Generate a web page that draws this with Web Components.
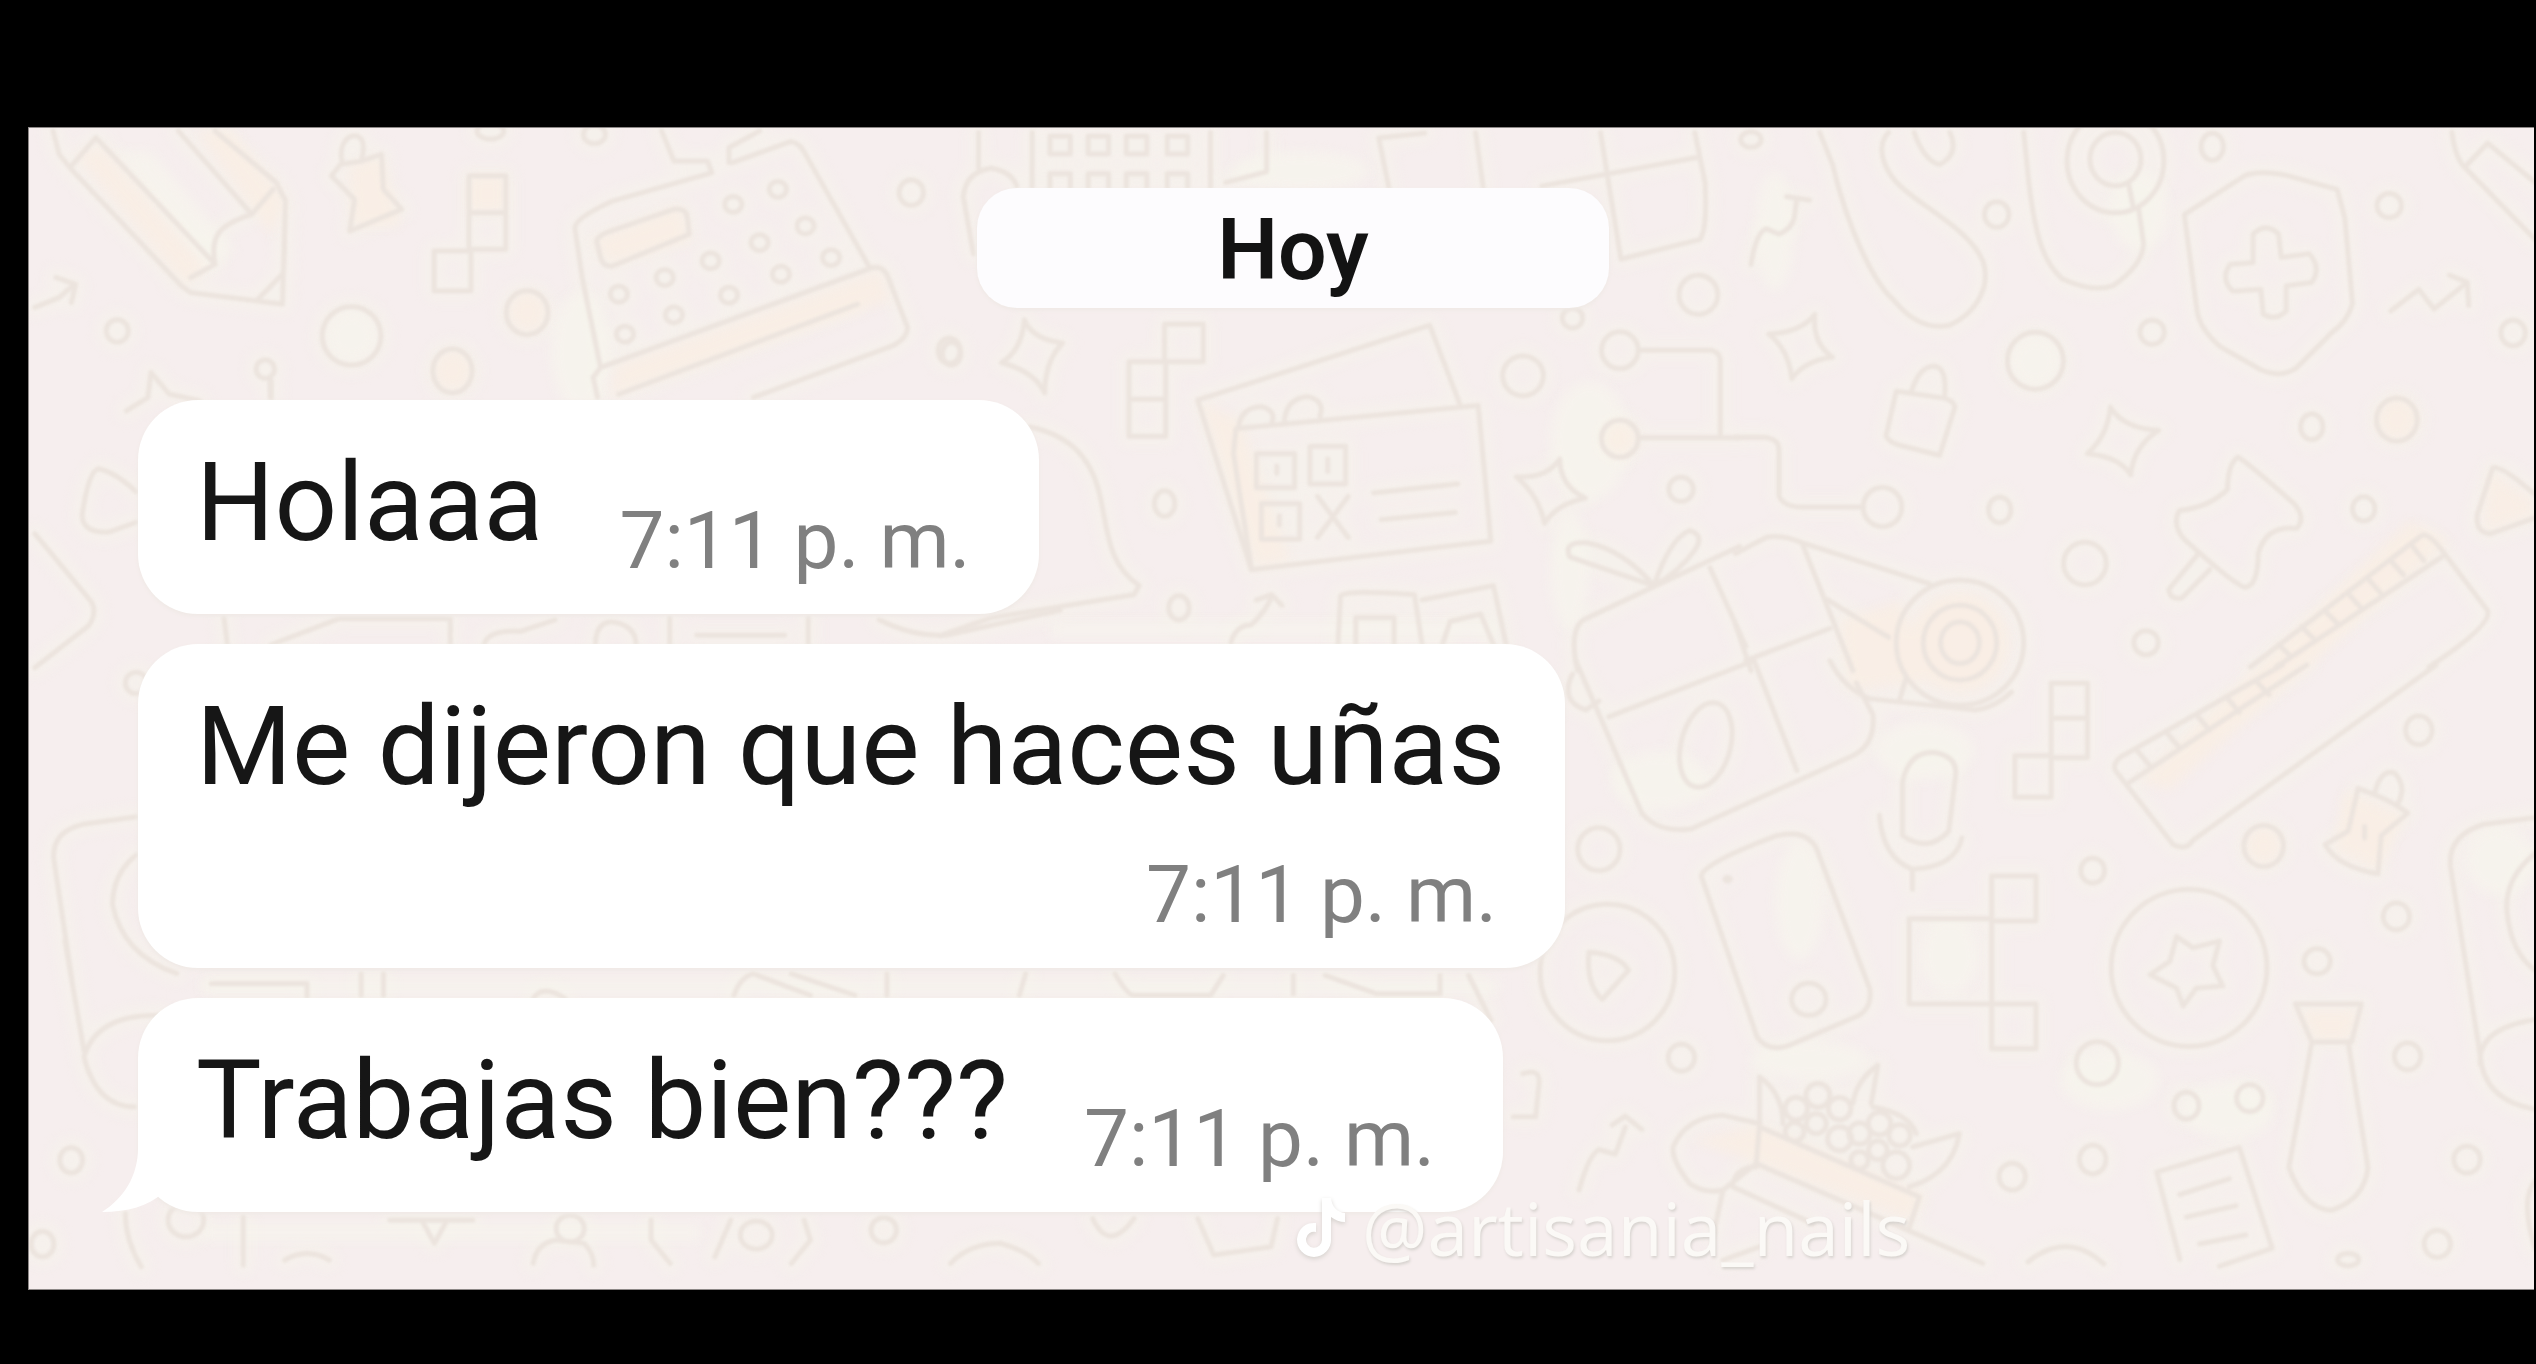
<!DOCTYPE html>
<html lang="es">
<head>
<meta charset="utf-8">
<title>Chat</title>
<style>
  body { margin: 0; background: #000; }
</style>
</head>
<body>
<chat-screen>
  <chat-wallpaper slot="wallpaper"></chat-wallpaper>
  <day-pill>Hoy</day-pill>
  <message-list>
    <chat-bubble time="7:11 p. m.">Holaaa</chat-bubble>
    <chat-bubble time="7:11 p. m." stacked>Me dijeron que haces uñas</chat-bubble>
    <chat-bubble time="7:11 p. m." tail>Trabajas bien???</chat-bubble>
  </message-list>
  <video-credit slot="credit">@artisania_nails</video-credit>
</chat-screen>

<template id="wallpaper">
  <style>
    :host { display: block; overflow: hidden; }
    svg { display: block; width: 100%; height: 100%; }
    #doodles * { vector-effect: non-scaling-stroke; }
    .line { fill: none; stroke-linecap: round; stroke-linejoin: round; }
    .tint { stroke: none; }
    .peach { opacity: .85; }
    .cream { opacity: .7; }
    .halo { opacity: .6; }
    .soft { filter: blur(6px); }
    .ink { filter: blur(1px); }
  </style>
  <svg viewBox="28 127 2507 1166" preserveAspectRatio="xMinYMin slice" aria-hidden="true">
    <defs>
      <g id="doodles">
        <g transform="translate(0 110) scale(.6122 .3333)">
          <path d="M85 60L95 130 115 175 295 525 310 545 460 580 465 270 450 215 350 60M155 80L350 460M115 165L155 80M290 60L410 310M350 460C340 370 360 340 410 310M350 460L310 500M410 310L445 235M420 565L460 490"/>
          <path d="M555 160L540 195 578 265 570 360 655 295 625 235 622 130 590 150ZM558 155C545 60 605 40 590 140"/>
          <path d="M765 195H825V305H765ZM765 305H825V415H765ZM708 420H768V540H708Z"/>
          <ellipse cx="573" cy="675" rx="48" ry="88"/><ellipse cx="860" cy="605" rx="34" ry="66"/><ellipse cx="738" cy="780" rx="32" ry="66"/>
          <ellipse cx="190" cy="660" rx="18" ry="34"/><ellipse cx="1488" cy="245" rx="20" ry="38"/><ellipse cx="432" cy="775" rx="15" ry="28"/><ellipse cx="1550" cy="720" rx="18" ry="38"/>
          <ellipse cx="800" cy="60" rx="22" ry="24"/><ellipse cx="970" cy="70" rx="18" ry="28"/>
          <path d="M440 800V860M55 590L95 560 120 520M90 500L122 520 115 575M245 785L275 850 325 870M245 785L240 860 205 900"/>
          <path d="M980 770L950 500 938 350Q940 320 1000 270L1162 185 1155 150H1100L1080 60M1190 155V110L1240 60M1195 155L1290 92Q1305 95 1312 120L1420 470"/>
          <path d="M980 770L1425 470Q1440 465 1448 490L1482 650Q1480 690 1450 710L1230 860M980 770L968 800 975 860M1010 850L1400 580M975 400Q970 380 990 365L1100 295Q1120 290 1122 320L1125 370 1000 465Q985 470 980 440Z"/>
          <g><ellipse cx="1270" cy="235" rx="14" ry="24"/><ellipse cx="1197" cy="280" rx="14" ry="24"/><ellipse cx="1315" cy="345" rx="14" ry="24"/><ellipse cx="1240" cy="395" rx="14" ry="24"/><ellipse cx="1160" cy="450" rx="14" ry="24"/><ellipse cx="1085" cy="500" rx="14" ry="24"/><ellipse cx="1010" cy="550" rx="14" ry="24"/><ellipse cx="1357" cy="440" rx="14" ry="24"/><ellipse cx="1275" cy="490" rx="14" ry="24"/><ellipse cx="1190" cy="553" rx="14" ry="24"/><ellipse cx="1100" cy="612" rx="14" ry="24"/><ellipse cx="1020" cy="670" rx="14" ry="24"/></g>
        </g>
        <g transform="translate(940 110) scale(.5102 .3571)">
          <path d="M75 60V160M180 60V215M530 60V215M640 60V170L560 200M65 400L45 240Q50 170 100 160 140 170 150 210"/>
          <path d="M215 70H255V120H215ZM290 70H330V120H290ZM365 70H405V120H365ZM445 70H485V120H445ZM215 215V175H255V215M290 215V175H330V215M365 215V175H405V215M445 215V175H485V215"/>
          <path d="M880 215L860 75 950 62M1050 60L1065 215M1295 60L1335 415 1490 360Q1505 330 1500 200L1480 60M1180 210L1485 130"/>
          <ellipse cx="1487" cy="515" rx="38" ry="55"/><ellipse cx="1143" cy="742" rx="40" ry="56"/><ellipse cx="1333" cy="670" rx="36" ry="52"/><ellipse cx="1333" cy="918" rx="36" ry="52"/><ellipse cx="1453" cy="1060" rx="24" ry="34"/><ellipse cx="1240" cy="580" rx="20" ry="28"/><ellipse cx="440" cy="1100" rx="20" ry="36"/><ellipse cx="468" cy="1392" rx="20" ry="34"/><ellipse cx="22" cy="680" rx="18" ry="32"/>
          <path d="M165 585Q180 640 240 650 205 700 205 790 185 730 120 705 160 670 165 585ZM440 597H516V702H440ZM370 702H442V807H370ZM370 807H442V912H370Z"/>
          <path d="M1020 825L960 600 505 810 610 1285 1080 1205 1055 825 580 890 575 960 610 1280M585 885Q590 830 630 828 660 840 650 875M675 865Q680 805 720 800 755 810 745 855"/>
          <path d="M620 960H695V1055H620ZM725 940H795V1045H725ZM630 1100H705V1200H630ZM740 1080L800 1195M800 1080L740 1195M850 1070L1015 1045M865 1145L1010 1125M660 995V1015M760 975V1010M665 1135V1160"/>
          <path d="M1215 975Q1215 1050 1265 1085 1210 1100 1185 1155 1175 1080 1130 1025 1190 1030 1215 975ZM1370 670H1510Q1530 675 1530 700V915M1370 915H1568"/>
          <path d="M175 885C260 910 300 980 315 1090 330 1190 330 1270 390 1330L380 1355 100 1420 0 1470M570 1490Q580 1440 610 1440 640 1400 650 1360M620 1370L650 1355 670 1385"/>
          <path d="M780 1495L785 1360Q790 1340 930 1355L945 1495M945 1370L1085 1330 1110 1495M815 1495V1420H890V1495M985 1495L1000 1430 1060 1410 1085 1495"/>
          <path d="M1400 1330L1235 1250Q1220 1205 1270 1210 1340 1230 1400 1330 1430 1200 1470 1175 1500 1190 1480 1230 1450 1290 1400 1330M1250 1568Q1230 1440 1270 1420L1568 1220M1510 1280L1580 1500"/>
        </g>
        <g transform="translate(1736 110) scale(.5102 .3571)">
          <path d="M0 1240L60 1195Q90 1185 130 1210L380 1325M130 1210L230 1568M180 1370L300 1475M0 1440L30 1568M20 1540L185 1450"/>
          <ellipse cx="440" cy="1490" rx="125" ry="175"/><ellipse cx="440" cy="1490" rx="72" ry="105"/><ellipse cx="440" cy="1490" rx="38" ry="58"/>
          <path d="M165 60L190 150C220 330 270 480 310 530 350 600 390 610 420 600 480 560 500 480 485 420 450 310 330 250 300 170 280 120 285 80 300 60M350 60Q370 140 400 150 440 120 420 60"/>
          <path d="M565 60L575 200C590 380 610 430 640 470Q700 510 740 490 800 430 800 370L790 270M770 200L780 270"/>
          <ellipse cx="745" cy="140" rx="95" ry="145"/><ellipse cx="745" cy="135" rx="50" ry="75"/>
          <path d="M880 290L1000 180Q1030 165 1080 180L1180 220 1195 300 1210 540Q1200 590 1170 620L1100 720Q1070 750 1030 725L950 660Q910 610 905 560Z"/>
          <path d="M1015 345Q1040 310 1065 345L1070 410 1125 400Q1150 440 1130 480L1080 490V560Q1060 590 1035 570L1030 500 975 505Q950 470 970 430L1015 425Z"/>
          <path d="M30 430Q40 340 60 330L85 345Q110 330 115 300L120 245M100 240L145 250M1285 560L1340 500 1370 555 1435 480M1400 460L1435 480 1438 545"/>
          <ellipse cx="512" cy="290" rx="24" ry="36"/><ellipse cx="935" cy="100" rx="22" ry="38"/><ellipse cx="1282" cy="265" rx="24" ry="34"/><ellipse cx="817" cy="620" rx="24" ry="34"/><ellipse cx="1525" cy="622" rx="24" ry="36"/><ellipse cx="588" cy="700" rx="55" ry="80"/><ellipse cx="1130" cy="885" rx="22" ry="36"/><ellipse cx="1297" cy="865" rx="40" ry="60"/><ellipse cx="518" cy="1118" rx="22" ry="36"/><ellipse cx="1232" cy="1115" rx="22" ry="34"/><ellipse cx="288" cy="1110" rx="38" ry="55"/><ellipse cx="685" cy="1268" rx="42" ry="60"/><ellipse cx="805" cy="1490" rx="24" ry="34"/><ellipse cx="30" cy="80" rx="20" ry="22"/>
          <path d="M155 570Q150 650 190 690 135 700 110 750 105 670 65 625 130 620 155 570ZM735 830Q760 890 830 895 780 940 775 1020 755 970 690 960 730 910 735 830Z"/>
          <path d="M315 785L295 910Q300 930 330 940L400 965 430 830Q430 815 410 805ZM345 785Q360 715 390 715 415 720 410 800M0 915H60Q85 920 85 950V1080Q95 1110 130 1110H250"/>
          <path d="M985 970Q1000 980 1095 1100 1120 1140 1100 1170 1040 1160 1025 1240 1025 1330 1000 1335 980 1330 880 1200 855 1160 870 1120 930 1110 965 1060 965 990 985 970ZM905 1245L850 1340Q850 1370 875 1365L930 1285"/>
          <path d="M1405 60Q1410 120 1425 150L1568 360M1435 150L1475 90 1568 200M1568 1075Q1500 990 1485 1000L1455 1130Q1450 1180 1480 1185L1568 1140"/>
          <path d="M1010 1558L1345 1190Q1360 1180 1390 1240L1475 1400Q1485 1440 1360 1558M1060 1558L1390 1245M1285 1260L1310 1300M1240 1310L1265 1350M1200 1350L1225 1390M1155 1400L1180 1435M1110 1445L1135 1480M1065 1495L1090 1530M1325 1215L1350 1260"/>
        </g>
        <g transform="translate(1500 660) scale(.6607 .449)">
          <path d="M115 0L215 340Q240 385 290 375L530 215Q570 190 565 120L540 50M165 125L385 0 450 245M500 0Q520 60 560 85L720 110Q750 105 775 70M605 90L615 40M110 30Q90 90 130 110L150 90"/>
          <ellipse cx="312" cy="188" rx="38" ry="95" transform="rotate(8 312 188)"/>
          <ellipse cx="150" cy="420" rx="32" ry="48"/><ellipse cx="163" cy="695" rx="102" ry="152"/><ellipse cx="275" cy="885" rx="20" ry="30"/><ellipse cx="1392" cy="155" rx="20" ry="32"/><ellipse cx="1157" cy="413" rx="30" ry="46"/><ellipse cx="898" cy="468" rx="18" ry="28"/><ellipse cx="1358" cy="570" rx="20" ry="30"/><ellipse cx="1238" cy="670" rx="20" ry="28"/><ellipse cx="1375" cy="882" rx="20" ry="30"/><ellipse cx="1044" cy="685" rx="118" ry="175"/><ellipse cx="905" cy="897" rx="32" ry="48"/><ellipse cx="1040" cy="992" rx="19" ry="30"/><ellipse cx="1136" cy="975" rx="20" ry="30"/><ellipse cx="776" cy="1150" rx="20" ry="30"/><ellipse cx="898" cy="1112" rx="20" ry="32"/><ellipse cx="1465" cy="1112" rx="20" ry="30"/><ellipse cx="1420" cy="1300" rx="20" ry="30"/><ellipse cx="1285" cy="1335" rx="16" ry="14"/><ellipse cx="468" cy="755" rx="26" ry="36"/><circle cx="345" cy="487" r="4"/>
          <path d="M135 650Q180 655 195 690L155 755Q130 720 135 650ZM305 480Q310 450 420 390 465 375 480 420L560 730Q565 770 545 790L450 850Q410 880 390 840Z"/>
          <path d="M610 270Q620 200 660 205 695 215 690 260L680 380Q650 430 610 390ZM575 345Q580 440 625 465 690 460 700 395M625 465V510M835 50H890V128H835ZM835 128H890V216H835ZM780 212H835V304H780Z"/>
          <path d="M1185 10L940 215Q925 235 935 250L1020 410Q1040 425 1050 400L1418 10M955 270L1222 10M965 200L985 235M1010 160L1030 195M1055 120L1075 155M1100 80L1120 115M1145 45L1165 75"/>
          <path d="M1300 285L1285 380 1250 410Q1270 460 1330 475L1335 390 1375 340Q1350 310 1300 285ZM1325 295Q1335 240 1355 250 1375 280 1360 320M1310 370V395M745 575H620V765H745M745 480H812V580H745M745 765H812V865H745V480"/>
          <path d="M1025 615L1050 640 1090 625 1080 680 1095 725 1055 730 1035 770 1025 730 985 700 1015 670ZM1205 765H1305L1290 850H1230ZM1230 850L1195 1130Q1220 1225 1260 1225 1310 1200 1315 1130L1285 850"/>
          <path d="M1568 350L1490 365Q1435 390 1440 460L1485 880Q1490 980 1568 1000M1568 800Q1480 820 1485 900M1568 430Q1525 480 1525 550 1530 650 1568 690M1568 1160Q1545 1200 1568 1310"/>
          <path d="M1030 1335L995 1140 1120 1085 1170 1310 1090 1350M1030 1190L1105 1155M1040 1240L1115 1215M1060 1300L1130 1280M120 1180Q135 1100 150 1090L175 1100 190 1040M170 1035L190 1015 215 1045M800 1340Q860 1270 915 1345"/>
        </g>
        <g transform="translate(1600 960) scale(.3333)">
          <path d="M220 560Q260 470 370 465L480 490 470 610 370 690Q310 700 270 670 215 600 220 560ZM480 500L960 710 930 800M470 610L880 790 1150 910M370 690L340 830M400 670Q410 620 470 620M400 680L640 790M480 860L370 900"/>
          <path d="M480 490V350Q550 400 550 490M760 430Q770 360 835 315L815 430M940 560L1080 520Q1060 640 930 680M820 440Q930 460 950 520"/>
          <circle cx="590" cy="445" r="34"/><circle cx="655" cy="405" r="36"/><circle cx="720" cy="445" r="34"/><circle cx="650" cy="490" r="30"/><circle cx="585" cy="515" r="28"/><circle cx="720" cy="535" r="36"/><circle cx="780" cy="520" r="32"/><circle cx="840" cy="490" r="34"/><circle cx="900" cy="525" r="32"/><circle cx="835" cy="570" r="28"/><circle cx="890" cy="615" r="40"/><circle cx="780" cy="600" r="26"/>
        </g>
        <g transform="translate(0 380) scale(.676 .3827)">
          <path d="M200 290Q170 240 145 230 130 230 120 350 120 400 160 395L200 370M50 400L130 570Q145 600 130 640L50 750M200 1140L120 1160Q75 1180 78 1250L105 1568M200 1240Q165 1290 165 1370 180 1500 260 1550"/>
          <path d="M330 620L335 690M400 690L500 622H660M665 622V690M715 690Q720 650 770 655L820 625M880 690Q880 630 905 630 940 640 940 690M990 620V690M1030 665H1160M1195 620V690M1300 625Q1350 670 1400 665L1568 600M400 0V45"/>
          <ellipse cx="200" cy="790" rx="16" ry="28"/>
        </g>
        <g transform="translate(0 940) scale(.6378 .3333)">
          <path d="M100 0L130 330M250 225Q150 220 130 350 150 500 210 500M330 130H480V170M565 100V165M600 100V165M835 175Q850 130 885 175M1150 165Q1160 110 1180 100L1270 165M1240 100L1340 165M1390 100V165"/>
          <ellipse cx="110" cy="660" rx="18" ry="38"/><ellipse cx="65" cy="912" rx="18" ry="38"/><ellipse cx="290" cy="840" rx="28" ry="50"/><ellipse cx="893" cy="865" rx="22" ry="40"/><ellipse cx="1185" cy="885" rx="25" ry="42"/><ellipse cx="1385" cy="870" rx="20" ry="38"/>
          <path d="M195 820Q195 900 220 980M380 830V975M445 960Q480 920 515 960M610 840H740M660 840L680 910 700 840M835 970Q840 910 870 900L915 910Q930 940 930 975M1020 840V900L1050 970M1120 950L1145 840M1260 840L1270 900 1240 970M1490 970Q1520 910 1568 910"/>
        </g>
        <g transform="translate(1000 940) scale(.6378 .3333)">
          <path d="M40 100L30 165M180 100Q200 165 210 165H330L350 105M460 105V160M510 105L590 160H690V105M735 105L770 240M820 400Q850 380 845 440L840 530 805 530M145 835Q170 940 210 835M310 835L335 945 425 920 435 835M0 910Q40 930 60 970"/>
        </g>
      </g>
    </defs>
    <use class="line soft halo" href="#doodles" stroke="#f6f3eb" stroke-width="20"/>
    <g class="tint soft cream" fill="#f7f5ed">
      <path d="M115 150L150 150 235 250 205 270Z"/>
      <circle cx="351" cy="335" r="26"/><circle cx="2036" cy="360" r="26"/>
      <ellipse cx="1590" cy="440" rx="40" ry="60"/><ellipse cx="1570" cy="570" rx="20" ry="60"/><ellipse cx="1775" cy="230" rx="20" ry="60"/>
      <ellipse cx="1660" cy="780" rx="50" ry="30"/><ellipse cx="1925" cy="750" rx="50" ry="30"/><ellipse cx="1800" cy="900" rx="25" ry="60"/>
      <ellipse cx="2230" cy="1110" rx="45" ry="30"/><ellipse cx="2500" cy="860" rx="35" ry="35"/><ellipse cx="1950" cy="955" rx="30" ry="40"/>
      <ellipse cx="2140" cy="210" rx="30" ry="40"/><ellipse cx="1300" cy="170" rx="70" ry="20"/><ellipse cx="1810" cy="1060" rx="60" ry="20"/>
      <ellipse cx="2110" cy="1080" rx="50" ry="30"/><ellipse cx="580" cy="350" rx="30" ry="60"/>
      <path d="M200 1225H700V1240H200ZM1050 622H1500V636H1050ZM200 979H1500V993H200Z"/>
    </g>
    <g class="tint soft peach" fill="#f9eee4">
      <path d="M75 155L100 145 205 265 185 285ZM195 130H230L285 200 270 235 250 205Z"/>
      <path d="M348 165L380 155 400 225 352 225ZM468 175H505V210H468ZM590 240L680 205 690 240 610 262ZM615 365L880 270 890 300 610 395Z"/>
      <circle cx="527" cy="311" r="19"/><circle cx="452" cy="370" r="19"/>
      <path d="M1200 400L1240 420 1290 560 1255 565ZM2410 520L2450 540 2170 790 2140 780ZM1840 620L1900 600 1930 680 1850 690Z"/>
      <circle cx="1960" cy="642" r="50"/><circle cx="2398" cy="418" r="20"/><circle cx="1620" cy="438" r="17"/>
      <path d="M2490 470L2534 500 2534 515 2485 530ZM1690 1140L1760 1125 1925 1195 1910 1220 1750 1160ZM2300 1010H2360L2350 1040H2315Z"/>
      <circle cx="2264" cy="845" r="18"/><path d="M2345 790L2405 815 2380 870 2335 850Z"/>
    </g>
    <use class="line ink" href="#doodles" stroke="#ece4de" stroke-width="5"/>
  </svg>
</template>

<script>
  const FONT = 'Roboto, "Liberation Sans", sans-serif';

  class ChatScreen extends HTMLElement {
    constructor() {
      super();
      this.attachShadow({ mode: 'open' }).innerHTML = `
        <style>
          :host { display: block; box-sizing: border-box; min-height: 100vh; padding: 127px 2px 71px 28px; background: #000; }
          main { position: relative; box-sizing: border-box; border: 1px solid #8d8887; border-right: 0;
                 background: #f6eeee; padding: 60px 86px 77px 109px; display: flex; flex-direction: column; gap: 92px; }
          slot[name=wallpaper]::slotted(*) { position: absolute; inset: 0; }
          slot[name=credit]::slotted(*) { position: absolute; left: 50.5%; bottom: 16px; z-index: 2; }
        </style>
        <main><slot name="wallpaper"></slot><slot></slot><slot name="credit"></slot></main>`;
    }
  }

  class ChatWallpaper extends HTMLElement {
    constructor() {
      super();
      this.attachShadow({ mode: 'open' })
        .append(document.getElementById('wallpaper').content.cloneNode(true));
    }
  }

  class DayPill extends HTMLElement {
    constructor() {
      super();
      this.attachShadow({ mode: 'open' }).innerHTML = `
        <style>
          :host { display: block; position: relative; align-self: center; padding: 12px 240px 8px;
                  border-radius: 40px; background: #fdfcfe; box-shadow: 0 2px 4px #efe9e5;
                  font: 600 86px/100px ${FONT}; color: #131313; }
        </style><slot></slot>`;
    }
  }

  class MessageList extends HTMLElement {
    constructor() {
      super();
      this.attachShadow({ mode: 'open' }).innerHTML = `
        <style>
          :host { display: flex; position: relative; flex-direction: column; align-items: flex-start; gap: 30px; }
        </style><slot></slot>`;
    }
  }

  class ChatBubble extends HTMLElement {
    constructor() {
      super();
      this.attachShadow({ mode: 'open' });
    }
    connectedCallback() {
      this.shadowRoot.innerHTML = `
        <style>
          :host { display: flex; position: relative; align-items: flex-end; gap: 76px;
                  padding: 38px 60px 26px 58px; border-radius: 60px; background: #fff;
                  box-shadow: 0 2px 4px #efe9e5; font-family: ${FONT}; white-space: nowrap; }
          :host([stacked]) { flex-direction: column; gap: 36px; }
          p { margin: 0; align-self: flex-start; font-size: 110px; line-height: 130px; color: #161616; }
          time { padding: 56px 8px 0 0; font-size: 80px; line-height: 94px; color: #808080; }
          :host([stacked]) time { padding-top: 0; }
          svg { position: absolute; left: -36px; bottom: 0; width: 120px; height: 64px; }
        </style>
        <p><slot></slot></p><time>${this.getAttribute('time')}</time>
        ${this.hasAttribute('tail') ? '<svg viewBox="0 0 120 64" aria-hidden="true"><path fill="#fff" d="M36 0C36 28 22 50 0 64 26 64 46 58 61 45 70 54 84 61 100 63L110 0Z"/></svg>' : ''}`;
    }
  }

  class VideoCredit extends HTMLElement {
    constructor() {
      super();
      this.attachShadow({ mode: 'open' }).innerHTML = `
        <style>
          :host { display: flex; align-items: center; gap: 16px; white-space: nowrap;
                  font: 400 73px/90px "Open Sans", "Noto Sans", sans-serif; color: #fbf9f6;
                  text-shadow: 1px 2px 3px #d6d2ce; }
          svg { width: 52px; height: 64px; filter: drop-shadow(0 2px 2px #d6d2ce); }
        </style>
        <svg viewBox="0 0 52 64" aria-hidden="true"><path d="M28 2H37C38 11 43 16 51 17V26C46 26 41 24 37 21V43A17 17 0 1 1 22 27V36A8 8 0 1 0 28 44Z" fill="#fff"/></svg>
        <span><slot></slot></span>`;
    }
  }

  customElements.define('chat-wallpaper', ChatWallpaper);
  customElements.define('day-pill', DayPill);
  customElements.define('message-list', MessageList);
  customElements.define('chat-bubble', ChatBubble);
  customElements.define('video-credit', VideoCredit);
  customElements.define('chat-screen', ChatScreen);
</script>
</body>
</html>
